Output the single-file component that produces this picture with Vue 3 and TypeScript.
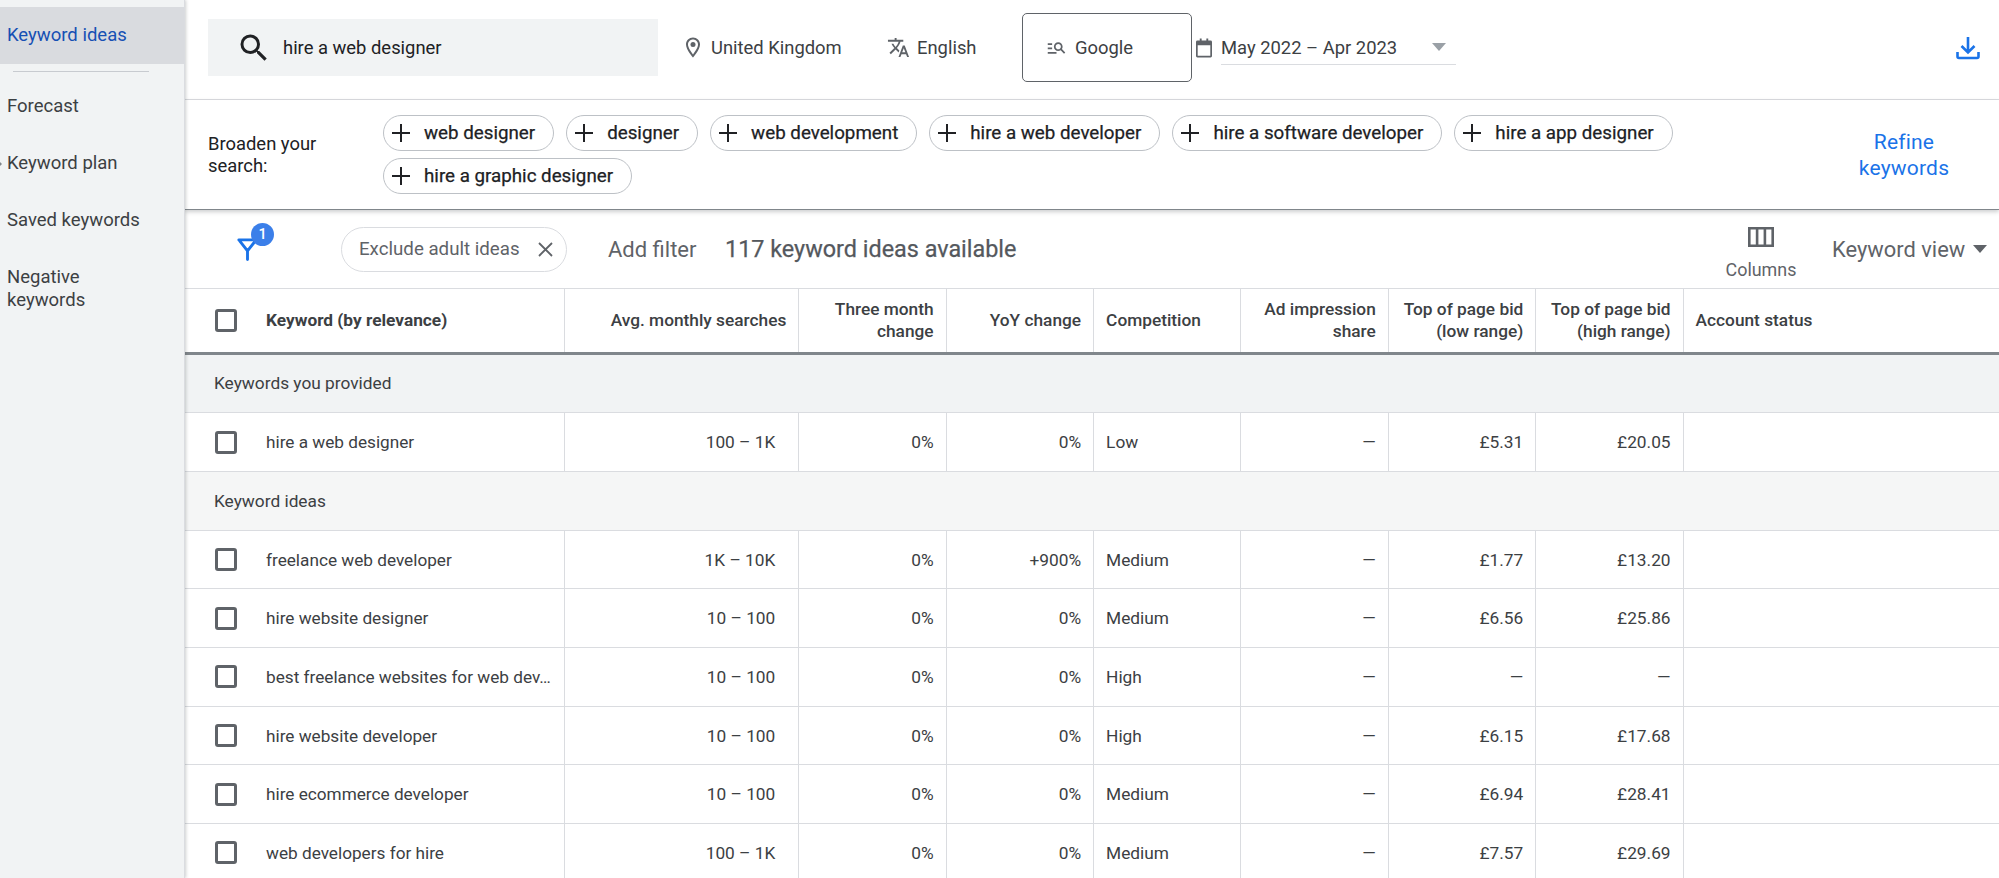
<script setup lang="ts">
interface Row { kw: string; avg: string; three: string; yoy: string; comp: string; imp: string; low: string; high: string }
const provided: Row[] = [
  { kw: 'hire a web designer', avg: '100 – 1K', three: '0%', yoy: '0%', comp: 'Low', imp: '—', low: '£5.31', high: '£20.05' },
]
const ideas: Row[] = [
  { kw: 'freelance web developer', avg: '1K – 10K', three: '0%', yoy: '+900%', comp: 'Medium', imp: '—', low: '£1.77', high: '£13.20' },
  { kw: 'hire website designer', avg: '10 – 100', three: '0%', yoy: '0%', comp: 'Medium', imp: '—', low: '£6.56', high: '£25.86' },
  { kw: 'best freelance websites for web dev…', avg: '10 – 100', three: '0%', yoy: '0%', comp: 'High', imp: '—', low: '—', high: '—' },
  { kw: 'hire website developer', avg: '10 – 100', three: '0%', yoy: '0%', comp: 'High', imp: '—', low: '£6.15', high: '£17.68' },
  { kw: 'hire ecommerce developer', avg: '10 – 100', three: '0%', yoy: '0%', comp: 'Medium', imp: '—', low: '£6.94', high: '£28.41' },
  { kw: 'web developers for hire', avg: '100 – 1K', three: '0%', yoy: '0%', comp: 'Medium', imp: '—', low: '£7.57', high: '£29.69' },
]
const chipsA = ['web designer', 'designer', 'web development', 'hire a web developer', 'hire a software developer', 'hire a app designer']
const groups = [
  { title: 'Keywords you provided', rows: provided, cls: 'g1' },
  { title: 'Keyword ideas', rows: ideas, cls: 'g2' },
]
</script>

<template>
  <div class="app">
    <aside class="side">
      <div class="nav active">Keyword ideas</div>
      <div class="divider"></div>
      <div class="nav">Forecast</div>
      <div class="nav caret">Keyword plan</div>
      <div class="nav">Saved keywords</div>
      <div class="nav two">Negative keywords</div>
    </aside>

    <main class="main">
      <header class="top">
        <div class="search">
          <svg class="i-search" viewBox="0 0 24 24"><path d="M15.5 14h-.79l-.28-.27A6.471 6.471 0 0 0 16 9.5 6.5 6.5 0 1 0 9.5 16c1.61 0 3.09-.59 4.23-1.57l.27.28v.79l5 4.99L20.49 19l-4.99-5zm-6 0C7.01 14 5 11.99 5 9.5S7.01 5 9.5 5 14 7.01 14 9.5 11.99 14 9.5 14z"/></svg>
          <span>hire a web designer</span>
        </div>
        <div class="loc">
          <svg class="i-pin" viewBox="0 0 24 24"><path d="M12 2C8.13 2 5 5.13 5 9c0 5.25 7 13 7 13s7-7.75 7-13c0-3.87-3.13-7-7-7zM7 9c0-2.76 2.24-5 5-5s5 2.24 5 5c0 2.88-2.88 7.19-5 9.88C9.92 16.21 7 11.85 7 9z"/><circle cx="12" cy="9" r="2.5"/></svg>
          <span>United Kingdom</span>
        </div>
        <div class="lang">
          <svg class="i-lang" viewBox="0 0 24 24"><path d="M12.87 15.07l-2.54-2.51.03-.03c1.74-1.94 2.98-4.17 3.71-6.53H17V4h-7V2H8v2H1v1.99h11.17C11.5 7.92 10.44 9.75 9 11.35 8.07 10.32 7.3 9.19 6.69 8h-2c.73 1.63 1.73 3.17 2.98 4.56l-5.09 5.02L4 19l5-5 3.11 3.11.76-2.04zM18.5 10h-2L12 22h2l1.12-3h4.75L21 22h2l-4.5-12zm-2.62 7l1.62-4.33L19.12 17h-3.24z"/></svg>
          <span>English</span>
        </div>
        <div class="net">
          <svg class="i-net" viewBox="0 0 24 24"><path d="M7 9H2V7h5v2zm0 3H2v2h5v-2zm13.59 7l-3.83-3.83c-.8.52-1.74.83-2.76.83-2.76 0-5-2.24-5-5s2.24-5 5-5 5 2.24 5 5c0 1.02-.31 1.96-.83 2.75L22 17.59 20.59 19zM17 11c0-1.65-1.35-3-3-3s-3 1.35-3 3 1.35 3 3 3 3-1.35 3-3zM2 19h10v-2H2v2z"/></svg>
          <span>Google</span>
        </div>
        <svg class="i-cal" viewBox="0 0 17 20"><path d="M4 0h2v2h5V0h2v2h2.500A1.500 1.500 0 0 1 17 3.500V18.500A1.500 1.500 0 0 1 15.500 20H1.500A1.500 1.500 0 0 1 0 18.500V3.500A1.500 1.500 0 0 1 1.500 2H4zM1.800 7v11.200h13.400V7z"/></svg>
        <div class="date">
          <span>May 2022 – Apr 2023</span>
          <i class="tri grey"></i>
        </div>
        <svg class="i-down" viewBox="0 0 24 24"><path d="M12 1v15M5.500 10l6.500 6.500 6.500-6.500M1.500 16v4.500a1.500 1.500 0 0 0 1.500 1.500h18a1.500 1.500 0 0 0 1.500-1.500V16" fill="none" stroke="#1a73e8" stroke-width="2.600"/></svg>
      </header>

      <section class="broaden">
        <div class="blabel">Broaden your<br />search:</div>
        <div class="chips">
          <div class="row-chips">
            <div v-for="c in chipsA" :key="c" class="chip">
              <svg class="i-plus" viewBox="0 0 18 18"><path d="M9 0v18M0 9h18" stroke="#202124" stroke-width="2" fill="none"/></svg>
              <span>{{ c }}</span>
            </div>
          </div>
          <div class="row-chips">
            <div class="chip">
              <svg class="i-plus" viewBox="0 0 18 18"><path d="M9 0v18M0 9h18" stroke="#202124" stroke-width="2" fill="none"/></svg>
              <span>hire a graphic designer</span>
            </div>
          </div>
        </div>
        <div class="refine">Refine<br />keywords</div>
      </section>

      <section class="bar">
        <div class="funnel">
          <svg class="i-funnel" viewBox="0 0 21 24"><path d="M1.500 2h18M1.500 2l9 11.500M19.500 2l-9 11.500M10.500 13v9.500" fill="none" stroke="#1a73e8" stroke-width="3" stroke-linecap="round"/></svg>
          <span class="badge">1</span>
        </div>
        <div class="xchip">
          <span>Exclude adult ideas</span>
          <svg class="i-x" viewBox="0 0 15 15"><path d="M1 1l13 13M14 1L1 14" stroke="#5f6368" stroke-width="1.800" fill="none"/></svg>
        </div>
        <span class="add">Add filter</span>
        <span class="avail">117 keyword ideas available</span>
        <div class="cols">
          <svg class="i-cols" viewBox="0 0 26 20"><path d="M1.300 1.300h23.400v17.400H1.300zM9.100 1.300v17.400M16.900 1.300v17.400" fill="none" stroke="#5f6368" stroke-width="2.600"/></svg>
          <span>Columns</span>
        </div>
        <div class="view">
          <span>Keyword view</span>
          <i class="tri dark"></i>
        </div>
      </section>

      <div class="table">
        <div class="tr head">
          <div class="td kw"><span class="cb"></span><b>Keyword (by relevance)</b></div>
          <div class="td r">Avg. monthly searches</div>
          <div class="td r">Three month<br />change</div>
          <div class="td r">YoY change</div>
          <div class="td">Competition</div>
          <div class="td r">Ad impression<br />share</div>
          <div class="td r">Top of page bid<br />(low range)</div>
          <div class="td r">Top of page bid<br />(high range)</div>
          <div class="td">Account status</div>
        </div>
        <template v-for="g in groups" :key="g.title">
          <div class="group" :class="g.cls">{{ g.title }}</div>
          <div v-for="r in g.rows" :key="r.kw" class="tr body">
            <div class="td kw"><span class="cb"></span><span class="kwt">{{ r.kw }}</span></div>
            <div class="td r avg">{{ r.avg }}</div>
            <div class="td r">{{ r.three }}</div>
            <div class="td r">{{ r.yoy }}</div>
            <div class="td">{{ r.comp }}</div>
            <div class="td r">{{ r.imp }}</div>
            <div class="td r">{{ r.low }}</div>
            <div class="td r">{{ r.high }}</div>
            <div class="td"></div>
          </div>
        </template>
      </div>
    </main>
  </div>
</template>

<style>
html, body { margin: 0; overflow: hidden; background: #fff; }
</style>

<style scoped>
.app {
  display: flex;
  height: 878px;
  overflow: hidden;
  font-family: Roboto, "Liberation Sans", sans-serif;
  color: #3c4043;
  font-size: 17.3px;
}
svg { flex: none; display: block; }

.side {
  flex: none;
  width: 185px;
  background: #f1f3f4;
  padding-top: 7px;
  box-sizing: border-box;
  border-right: 1px solid #dadce0;
  box-shadow: 1px 0 3px rgba(60, 64, 67, .25);
  z-index: 3;
}
.nav {
  height: 57.300px;
  display: flex;
  align-items: center;
  padding-left: 7px;
  font-size: 18.5px;
  line-height: 23px;
  color: #3c4043;
  position: relative;
}
.nav.active { background: #d9dbdf; color: #1650b4; height: 57px; }
.nav.two { width: 130px; height: 80px; }
.nav.caret::before {
  content: "";
  position: absolute;
  left: 0;
  top: 27px;
  border-left: 2px solid #80868b;
  border-top: 2px solid transparent;
  border-bottom: 2px solid transparent;
}
.divider { height: 1px; margin: 7px 35px 5.500px 13px; background: #c8cbd0; }

.main { flex: 1; min-width: 0; display: flex; flex-direction: column; }

.top {
  height: 100px;
  flex: none;
  box-sizing: border-box;
  border-bottom: 1.500px solid #dadce0;
  display: flex;
  align-items: center;
  padding: 0 0 4px 23px;
  font-size: 18.4px;
  color: #3c4043;
}
.search {
  width: 450px;
  height: 57px;
  background: #f1f3f4;
  display: flex;
  align-items: center;
  padding-left: 28px;
  box-sizing: border-box;
  color: #202124;
  flex: none;
}
.i-search { width: 36px; height: 36px; margin-right: 11px; fill: #202124; }
.loc { display: flex; align-items: center; margin-left: 25px; width: 204px; flex: none; }
.i-pin { width: 24px; height: 27px; margin-right: 6px; margin-left: -2px; fill: #5f6368; }
.lang { display: flex; align-items: center; width: 135px; flex: none; }
.i-lang { width: 23px; height: 23px; margin-right: 7px; fill: #5f6368; }
.net {
  width: 170px;
  height: 69px;
  box-sizing: border-box;
  border: 1.500px solid #5f6368;
  border-radius: 5px;
  display: flex;
  align-items: center;
  padding-left: 23px;
  flex: none;
}
.i-net { width: 21px; height: 21px; margin-right: 8px; fill: #5f6368; }
.i-cal { width: 16px; height: 20px; margin-left: 4px; margin-right: 9px; fill: #5f6368; }
.date {
  width: 235px;
  height: 34px;
  box-sizing: border-box;
  border-bottom: 1.500px solid #dadce0;
  display: flex;
  align-items: center;
  position: relative;
  flex: none;
}
.date .tri { position: absolute; left: 211px; top: 12px; }
.tri { width: 0; height: 0; display: block; border-left: 7px solid transparent; border-right: 7px solid transparent; }
.tri.grey { border-top: 8px solid #9aa0a6; }
.tri.dark { border-top: 8px solid #5f6368; }
.i-down { width: 24px; height: 24px; margin-left: auto; margin-right: 19px; }

.broaden {
  height: 110px;
  flex: none;
  box-sizing: border-box;
  display: flex;
  position: relative;
  z-index: 2;
  padding-left: 23px;
  border-bottom: 1px solid #80868b;
  box-shadow: 0 2px 4px rgba(60, 64, 67, .25);
  background: #fff;
}
.blabel {
  width: 175px;
  flex: none;
  margin-top: 33px;
  line-height: 22px;
  font-size: 18.4px;
  color: #202124;
}
.chips { padding-top: 15px; display: flex; flex-direction: column; gap: 7px; }
.row-chips { display: flex; gap: 12px; }
.chip {
  height: 36px;
  box-sizing: border-box;
  border: 1.500px solid #bdc1c6;
  border-radius: 18px;
  display: flex;
  align-items: center;
  padding: 0 18px 0 8px;
  font-size: 18.750px;
  font-weight: 400;
  -webkit-text-stroke: .25px #202124;
  color: #202124;
  white-space: nowrap;
}
.i-plus { width: 18px; height: 18px; margin-right: 14px; }
.refine {
  margin-left: auto;
  width: 190px;
  text-align: center;
  color: #1a73e8;
  font-size: 21px;
  line-height: 26px;
  margin-top: 29px;
  letter-spacing: .2px;
}

.bar {
  height: 79px;
  flex: none;
  box-sizing: border-box;
  border-bottom: 1.500px solid #dadce0;
  display: flex;
  align-items: center;
  color: #5f6368;
}
.funnel { width: 156px; flex: none; height: 44px; position: relative; }
.i-funnel { position: absolute; left: 52px; top: 11px; width: 21px; height: 23px; }
.badge {
  position: absolute;
  left: 66px;
  top: -4px;
  width: 23px;
  height: 23px;
  border-radius: 50%;
  background: #3b7fe9;
  color: #fff;
  font-size: 14.500px;
  font-weight: 500;
  display: flex;
  align-items: center;
  justify-content: center;
}
.xchip {
  flex: none;
  width: 226px;
  height: 45px;
  box-sizing: border-box;
  border: 1.500px solid #dadce0;
  border-radius: 23px;
  display: flex;
  align-items: center;
  padding-left: 17px;
  font-size: 18.700px;
  color: #5f6368;
}
.i-x { width: 15px; height: 15px; margin-left: 18px; }
.add { margin-left: 41px; font-size: 22px; width: 117px; flex: none; }
.avail { font-size: 23.400px; font-weight: 400; color: #54585d; -webkit-text-stroke: .25px #54585d; }
.cols {
  margin-left: auto;
  width: 72px;
  display: flex;
  flex-direction: column;
  align-items: center;
  font-size: 17.900px;
  margin-right: 35px;
  gap: 12px;
  padding-top: 8px;
}
.i-cols { width: 26px; height: 20px; }
.view { display: flex; align-items: center; width: 167px; flex: none; font-size: 21.900px; gap: 8px; }

.table { flex: 1; min-height: 0; }
.tr {
  display: grid;
  grid-template-columns: 380px 234.300px 147.300px 147.500px 147.400px 147.300px 147.500px 147.300px 1fr;
  box-sizing: border-box;
  border-bottom: 1.500px solid #dadce0;
}
.head {
  height: 66px;
  border-bottom: 3px solid #80868b;
  font-weight: 500;
  line-height: 21.500px;
  font-size: 17.300px;
}
.body { height: 58.700px; }
.td {
  display: flex;
  align-items: center;
  box-sizing: border-box;
  padding: 0 12px;
  border-right: 1.500px solid #dadce0;
  min-width: 0;
}
.td:last-child { border-right: 0; }
.td.r { justify-content: flex-end; text-align: right; }
.td.avg { padding-right: 23px; }
.kw { padding: 0 8px 0 30px; }
.kw b { font-weight: 700; color: #3c4043; }
.kwt { white-space: nowrap; font-size: 17.200px; }
.cb {
  flex: none;
  width: 22px;
  height: 23px;
  box-sizing: border-box;
  border: 3px solid #5f6368;
  border-radius: 3px;
  margin-right: 29px;
}
.group {
  height: 58.700px;
  box-sizing: border-box;
  display: flex;
  align-items: center;
  padding-left: 29px;
  color: #3c4043;
  border-bottom: 1.500px solid #dadce0;
}
.g1 { background: #f1f3f4; height: 58.300px; padding-bottom: 2px; }
.g2 { background: #f5f6f6; }
</style>
